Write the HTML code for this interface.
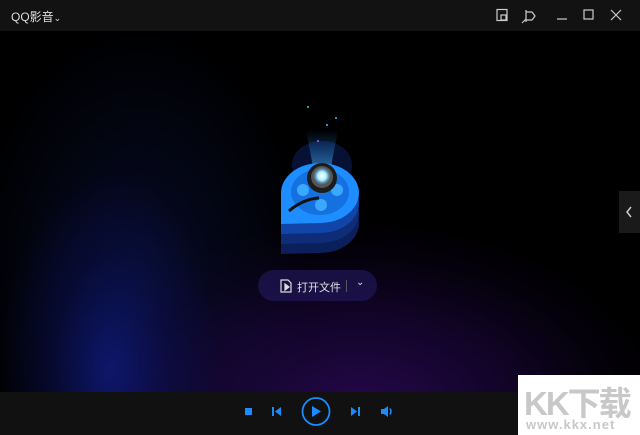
<!DOCTYPE html><html><head><meta charset="utf-8"><style>
body{margin:0;width:640px;height:435px;overflow:hidden;background:#000;font-family:"Liberation Sans","Noto Sans CJK SC",sans-serif;position:relative}
.top{position:absolute;left:0;top:0;width:640px;height:31px;background:#121212}
.main{position:absolute;left:0;top:31px;width:640px;height:361px;background:
radial-gradient(ellipse 110px 200px at 110px 340px,rgba(20,35,170,.55),rgba(12,20,110,.3) 55%,transparent 100%),
radial-gradient(ellipse 300px 190px at 360px 380px,rgba(50,10,100,.75),rgba(35,8,80,.5) 50%,rgba(20,5,50,.25) 80%,transparent 100%),
radial-gradient(ellipse 170px 260px at 140px 250px,rgba(15,25,90,.45),transparent 100%),#000}
.bot{position:absolute;left:0;top:392px;width:640px;height:43px;background:#111}
.t{position:absolute;color:#ddd;font-size:12px}
.side{position:absolute;left:619px;top:191px;width:21px;height:42px;background:#1a1a1a}
.btn{position:absolute;left:258px;top:270px;width:119px;height:31px;border-radius:16px;background:rgba(40,30,110,.5)}
.wm{position:absolute;left:518px;top:375px;width:122px;height:60px;background:#fff}
</style></head><body>
<div class="top"></div>
<div class="t" style="left:11px;top:8px">QQ影音<span style="font-size:9px">⌄</span></div>
<svg style="position:absolute;left:490px;top:6px" width="145" height="20" fill="none" stroke="#ccc" stroke-width="1.2">
<rect x="7" y="3.5" width="10" height="11"/><rect x="11" y="9" width="5" height="5"/>
<path d="M36 4v12M36 6l6 0 3 4-3 4h-6M32 17l4-4"/>
<path d="M67 13h10"/>
<rect x="94" y="4" width="9" height="9"/>
<path d="M121 4l10 10M131 4l-10 10"/>
</svg>
<div class="main"></div>
<svg style="position:absolute;left:0;top:0" width="640" height="435">
<defs><radialGradient id="g" cx=".5" cy=".5" r=".5"><stop offset="0" stop-color="#fff"/><stop offset=".5" stop-color="#aef"/><stop offset="1" stop-color="#3af" stop-opacity="0"/></radialGradient>
<linearGradient id="b" x1="0" y1="0" x2="0" y2="1"><stop offset="0" stop-color="#1a8bff" stop-opacity="0"/><stop offset="1" stop-color="#5bf" stop-opacity=".6"/></linearGradient>
<path id="d" d="M281 224V193A39 30 0 1 1 320 223z"/></defs>
<ellipse cx="322" cy="165" rx="30" ry="24" fill="#0a1d55" opacity=".6"/>
<path d="M306 130L314 172h16L338 130z" fill="url(#b)"/>
<use href="#d" fill="#0b1f5a" transform="translate(0,30)"/>
<use href="#d" fill="#0e2c78" transform="translate(0,20)"/>
<use href="#d" fill="#1245a8" transform="translate(0,10)"/>
<use href="#d" fill="#1e8dff"/>
<ellipse cx="320" cy="192" rx="29" ry="23" fill="#1570e0"/>
<circle cx="303" cy="190" r="6" fill="#3aa8ff"/><circle cx="337" cy="190" r="6" fill="#3aa8ff"/><circle cx="321" cy="205" r="6" fill="#3aa8ff"/>
<path d="M289 211q14-12 30-13" stroke="#111" stroke-width="3" fill="none"/>
<circle cx="322" cy="178" r="15" fill="#1c1c1c"/><circle cx="322" cy="177" r="11" fill="#555"/>
<circle cx="322" cy="176" r="9" fill="url(#g)"/>
<circle cx="308" cy="107" r="1" fill="#3cf"/><circle cx="336" cy="118" r="1" fill="#3cf"/><circle cx="327" cy="125" r="1" fill="#3cf"/><circle cx="318" cy="141" r="1" fill="#a6f"/>
</svg>
<div class="btn"></div>
<svg style="position:absolute;left:279px;top:279px" width="14" height="14" fill="none" stroke="#ddd" stroke-width="1.2"><path d="M2 1h7l3 3v9H2z"/><path d="M6 5l4 3-4 3z" fill="#ddd"/></svg>
<div class="t" style="left:297px;top:279px;font-size:11px;color:#e0e0e0">打开文件</div>
<div style="position:absolute;left:346px;top:280px;width:1px;height:12px;background:#556"></div>
<div class="t" style="left:356px;top:277px;font-size:10px">⌄</div>
<div class="side"></div>
<svg style="position:absolute;left:624px;top:205px" width="10" height="14"><path d="M7 2L3 7l4 5" stroke="#ccc" stroke-width="1.5" fill="none"/></svg>
<div class="bot"></div>
<svg style="position:absolute;left:240px;top:396px" width="160" height="34" fill="#1a8cff">
<rect x="5" y="12" width="7" height="7"/>
<rect x="32" y="11" width="2" height="9"/><path d="M35 15.5l6-4.5v9z"/>
<circle cx="76" cy="15.5" r="13.5" fill="none" stroke="#1a8cff" stroke-width="1.8"/><path d="M72 10v11l9-5.5z"/>
<path d="M111 11l6 4.5-6 4.5z"/><rect x="118" y="11" width="2" height="9"/>
<path d="M141 13h3l4-3v11l-4-3h-3z"/><path d="M150 12.5q2 3 0 6" stroke="#1a8cff" stroke-width="1.5" fill="none"/>
</svg>
<div class="wm"><div style="position:absolute;left:6px;top:2px;font-size:33px;font-weight:bold;color:#c8c8c8;letter-spacing:-2px">KK下载</div><div style="position:absolute;left:8px;top:42px;font-size:13px;font-weight:bold;color:#c8c8c8;letter-spacing:1px">www.kkx.net</div></div>
</body></html>
